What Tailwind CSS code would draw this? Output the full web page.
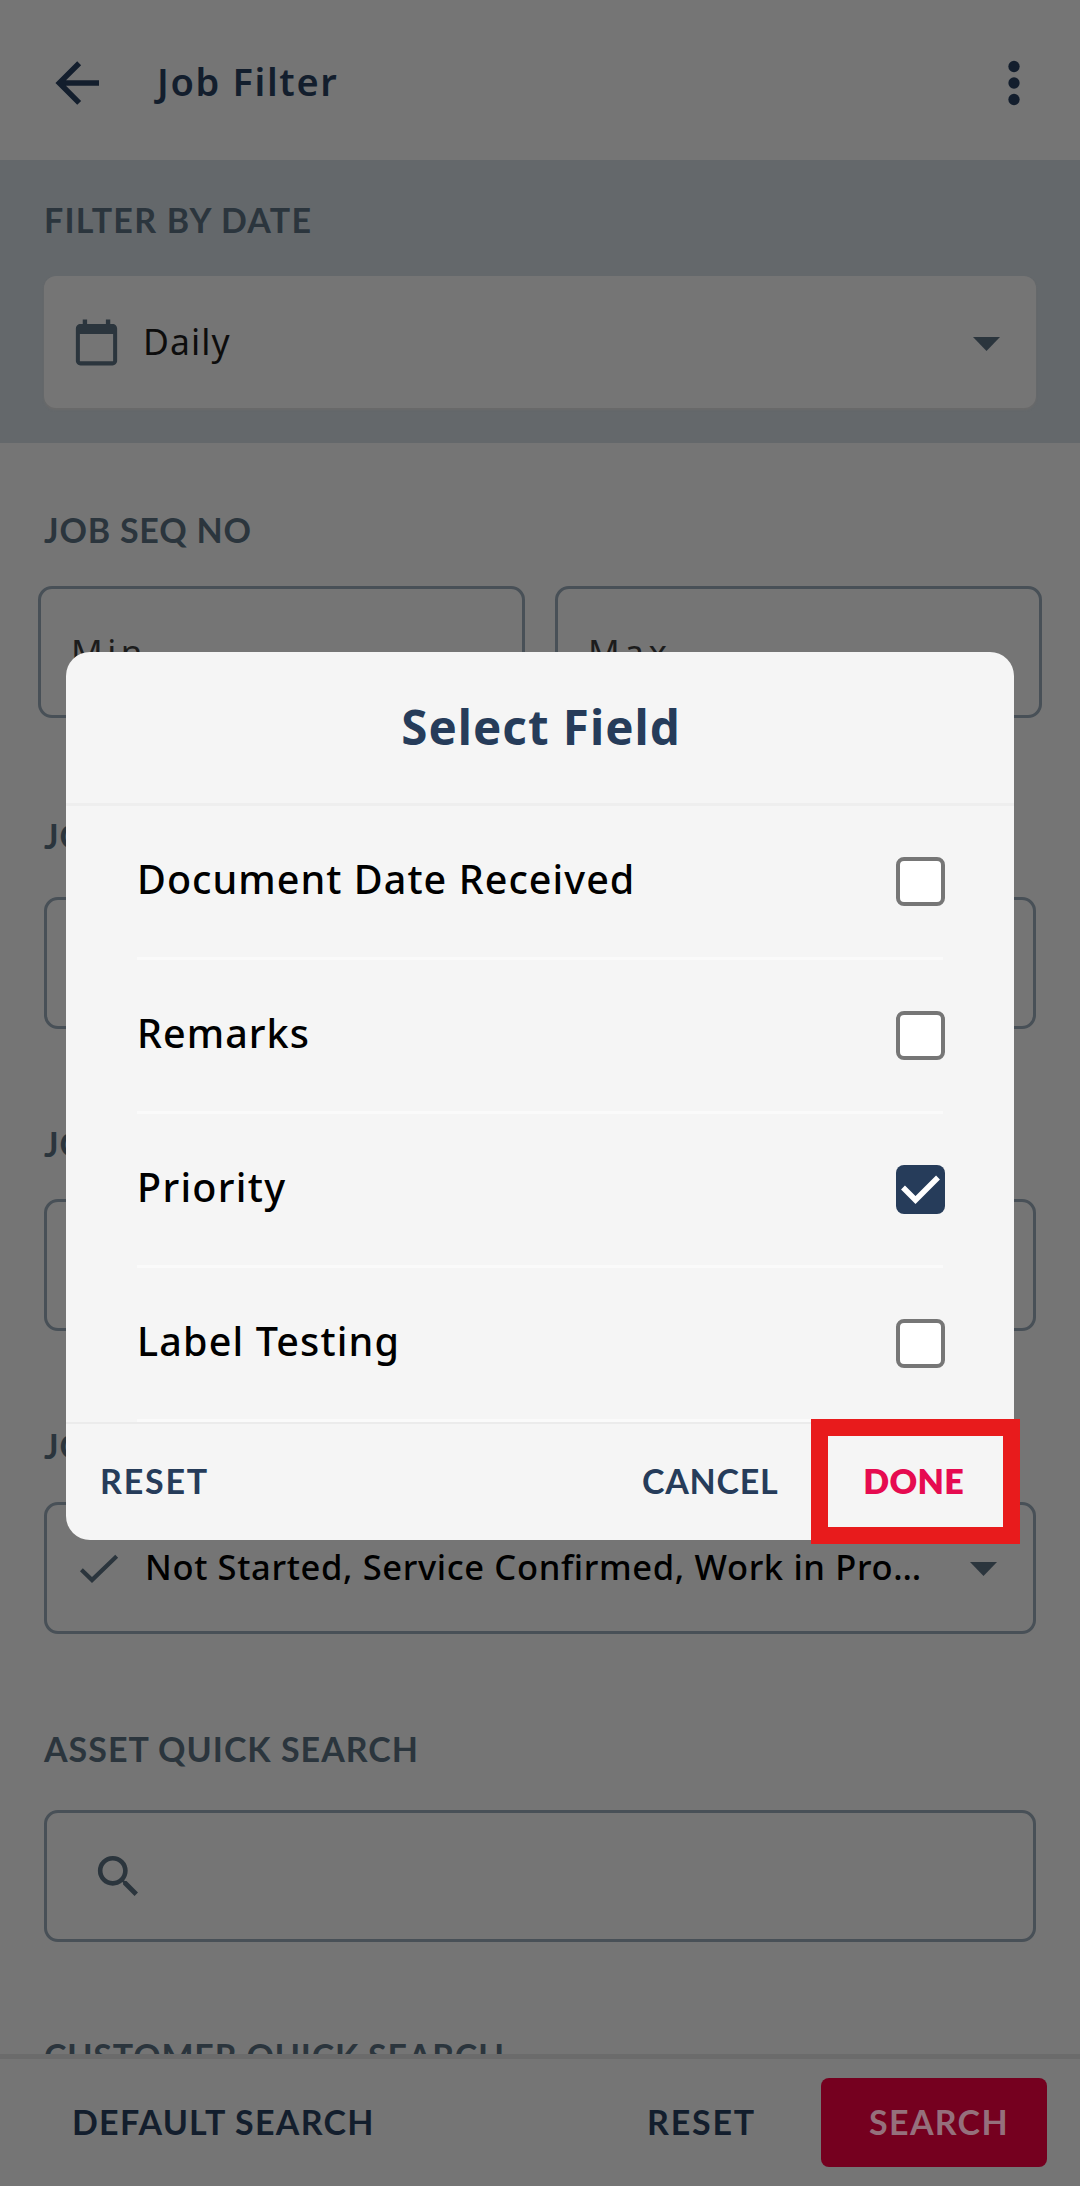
<!DOCTYPE html>
<html lang="en">
<head>
<meta charset="utf-8">
<title>Job Filter</title>
<script src="https://cdn.jsdelivr.net/npm/@tailwindcss/browser@4"></script>
</head>
<body class="bg-white font-['Noto_Sans',sans-serif]">
<div class="relative w-[1080px] h-[2195px] overflow-hidden">

  <!-- Dimmed page behind the dialog -->
  <div class="flex flex-col h-[2186px] bg-[#757575]">
    <header class="flex items-center h-40 pl-11 pr-[33px] pt-[6px] text-[#131e2d] shrink-0">
      <svg class="size-[66px]" viewBox="0 0 24 24" fill="currentColor"><path d="M20 11v2H8l5.500 5.500-1.420 1.420L4.160 12l7.920-7.920L13.500 5.500 8 11z"/></svg>
      <h1 class="ml-[47px] mb-[5px] flex-1 text-[38px] leading-[50px] font-semibold tracking-[1.65px] whitespace-nowrap">Job Filter</h1>
      <svg class="size-[66px]" viewBox="0 0 24 24" fill="currentColor"><circle cx="12" cy="6" r="2.05"/><circle cx="12" cy="12" r="2.05"/><circle cx="12" cy="18" r="2.05"/></svg>
    </header>

    <section class="h-[283px] shrink-0 bg-[#64686b] px-11 pt-[36px]">
      <h2 class="font-['Lato',sans-serif] text-[34px] leading-[48px] font-bold tracking-[1.25px] text-[#2b353d]">FILTER BY DATE</h2>
      <div class="mt-8 flex items-center h-[132px] rounded-xl bg-[#757575] pl-[25px] pr-9 shadow-[0_2px_2px_#6a6a6a]">
        <svg class="size-[55px]" viewBox="0 0 24 24" fill="#2b353d"><path fill-rule="evenodd" d="M19 3.900h-1V2h-1.900v1.900H7.900V2H6v1.900H5c-1.100 0-2 .9-2 2V20c0 1.100.9 2 2 2h14c1.100 0 2-.9 2-2V5.900c0-1.100-.9-2-2-2zM4.750 8.250h14.500v11.900H4.750z"/></svg>
        <span class="ml-[19px] mb-[2px] flex-1 text-[35.5px] leading-[48px] tracking-[1.1px] text-[#0d0d0d]">Daily</span>
        <svg class="w-[27px] h-[14px] mt-1" viewBox="0 0 27 14"><path d="M0 0h27L13.500 14z" fill="#2b353d"/></svg>
      </div>
    </section>

    <main class="flex-1 min-h-0 overflow-hidden px-11 pt-[63px]">
      <h2 class="font-['Lato',sans-serif] text-[34px] leading-[48px] font-bold tracking-[0.8px] text-[#2b353d]">JOB SEQ NO</h2>
      <div class="mt-[32px] -mx-1.5 grid grid-cols-2 gap-[30px]">
        <div class="flex items-center h-[132px] rounded-[14px] border-[3px] border-[#485057] pl-[30px] text-[35px] tracking-[4.5px] text-[#1c1c1c]">Min</div>
        <div class="flex items-center h-[132px] rounded-[14px] border-[3px] border-[#485057] pl-[30px] text-[35px] tracking-[4.5px] text-[#1c1c1c]">Max</div>
      </div>
      <h2 class="mt-[94px] font-['Lato',sans-serif] text-[34px] leading-[48px] font-bold tracking-[1px] text-[#2b353d]">JOB NO</h2>
      <div class="mt-[37px] h-[132px] rounded-[14px] border-[3px] border-[#485057]"></div>
      <h2 class="mt-[91px] font-['Lato',sans-serif] text-[34px] leading-[48px] font-bold tracking-[1px] text-[#2b353d]">JOB TYPE</h2>
      <div class="mt-[31px] h-[132px] rounded-[14px] border-[3px] border-[#485057]"></div>
      <h2 class="mt-[91px] font-['Lato',sans-serif] text-[34px] leading-[48px] font-bold tracking-[1px] text-[#2b353d]">JOB STATUS</h2>
      <div class="mt-[32px] flex items-center h-[132px] rounded-[14px] border-[3px] border-[#485057] pl-[23px] pr-9">
        <svg class="size-[55px]" viewBox="0 0 24 24" fill="#2b353d"><path d="M21 7.300 9.600 18.300 4.350 13.200l1.250-1.300 4 3.850L19.750 6z"/></svg>
        <span class="ml-[20px] mb-[3px] flex-1 text-[34.5px] leading-[48px] font-medium tracking-[0.64px] whitespace-nowrap text-black">Not Started, Service Confirmed, Work in Pro…</span>
        <svg class="w-[27px] h-[14px] mt-0.5 shrink-0" viewBox="0 0 27 14"><path d="M0 0h27L13.500 14z" fill="#2b353d"/></svg>
      </div>
      <h2 class="mt-[91px] font-['Lato',sans-serif] text-[34px] leading-[48px] font-bold tracking-[1px] text-[#2b353d]">ASSET QUICK SEARCH</h2>
      <div class="mt-[37px] flex items-center h-[132px] rounded-[14px] border-[3px] border-[#485057] pl-[44px]">
        <svg class="size-[55px]" viewBox="0 0 24 24" fill="#2b353d"><path d="M9.500 3A6.500 6.500 0 0 1 16 9.500c0 1.610-.59 3.090-1.560 4.230l.27.27h.79l5 5-1.500 1.500-5-5v-.79l-.27-.27A6.516 6.516 0 0 1 9.500 16a6.500 6.500 0 0 1 0-13m0 2C7 5 5 7 5 9.500S7 14 9.500 14 14 12 14 9.500 12 5 9.500 5"/></svg>
      </div>
      <h2 class="mt-[90px] font-['Lato',sans-serif] text-[34px] leading-[48px] font-bold tracking-[0.8px] text-[#2b353d]">CUSTOMER QUICK SEARCH</h2>
    </main>

    <footer class="flex items-center h-[132px] shrink-0 border-t-[5px] border-[#6b6b6b] pl-[72px] pr-[33px] font-['Lato',sans-serif] text-[34px] leading-[48px] font-bold text-[#131e2d]">
      <span class="flex-1 mb-[2px] tracking-[1.25px]">DEFAULT SEARCH</span>
      <span class="mr-[65px] mb-[2px] tracking-[1.8px]">RESET</span>
      <span class="flex items-center justify-center w-[226px] h-[89px] pl-[10px] pb-[2px] rounded-[8px] bg-[#75001f] tracking-[1.3px] text-[#95707c]">SEARCH</span>
    </footer>
  </div>

  <!-- Field picker dialog -->
  <div class="absolute left-[66px] top-[652px] w-[948px] h-[888px] rounded-[24px] bg-[#f5f5f5] flex flex-col">
    <h2 class="h-[154px] border-b-[3px] border-[#eeeeee] flex items-center justify-center pb-[2px] pl-[2px] text-[47.5px] font-bold tracking-[1px] text-[#263c5a]">Select Field</h2>
    <div class="flex flex-col px-[71px]">
      <label class="flex items-center justify-between h-[154px] border-b-[3px] border-[#fafafa] text-[39.5px] font-medium tracking-[1.05px] text-black"><span class="mb-[3px]">Document Date Received</span><span class="size-[49px] mr-[-2px] rounded-[8px] border-4 border-[#767676] bg-white"></span></label>
      <label class="flex items-center justify-between h-[154px] border-b-[3px] border-[#fafafa] text-[39.5px] font-medium tracking-[1.05px] text-black"><span class="mb-[3px]">Remarks</span><span class="size-[49px] mr-[-2px] rounded-[8px] border-4 border-[#767676] bg-white"></span></label>
      <label class="flex items-center justify-between h-[154px] border-b-[3px] border-[#fafafa] text-[39.5px] font-medium tracking-[1.3px] text-black"><span class="mb-[3px]">Priority</span><span class="size-[49px] mr-[-2px] rounded-[8px] bg-[#263c5a]"><svg class="size-[49px]" viewBox="0 0 49 49"><path d="m7 22.500 12.500 12.500L42 12.500" fill="none" stroke="#fff" stroke-width="5.500"/></svg></span></label>
      <label class="flex items-center justify-between h-[154px] border-b-[3px] border-[#fafafa] text-[39.5px] font-medium tracking-[1.15px] text-black"><span class="mb-[3px]">Label Testing</span><span class="size-[49px] mr-[-2px] rounded-[8px] border-4 border-[#767676] bg-white"></span></label>
    </div>
    <div class="flex flex-1 items-center border-t-[2px] border-[#ebebeb] pl-[34px] pr-[50px] pb-[3px] font-['Lato',sans-serif] text-[34px] font-bold text-[#263c5a]">
      <span class="flex-1 tracking-[1.8px]">RESET</span>
      <span class="mr-[85px] tracking-[0.7px]">CANCEL</span>
      <span class="font-extrabold tracking-[0.3px] text-[#e60b50]">DONE</span>
    </div>
  </div>

  <!-- Highlight around the confirm action -->
  <div class="absolute left-[811px] top-[1419px] w-[208.500px] h-[125px] border-[17px] border-[#e81b1c]"></div>
</div>
</body>
</html>
